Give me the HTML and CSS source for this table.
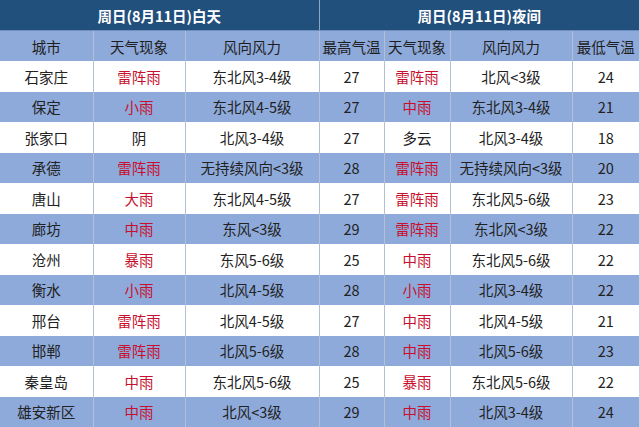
FILE: index.html
```html
<!DOCTYPE html>
<html lang="zh">
<head>
<meta charset="utf-8">
<link rel="stylesheet" href="styles.css">
</head>
<body>
<table class="wx">
  <colgroup>
    <col class="c1"><col class="c2"><col class="c3"><col class="c4"><col class="c5"><col class="c6"><col class="c7">
  </colgroup>
  <thead>
    <tr class="top">
      <th colspan="3">周日(8月11日)白天</th>
      <th colspan="4">周日(8月11日)夜间</th>
    </tr>
    <tr class="sub">
      <th>城市</th><th>天气现象</th><th>风向风力</th><th>最高气温</th><th>天气现象</th><th>风向风力</th><th>最低气温</th>
    </tr>
  </thead>
  <tbody>
    <tr><td>石家庄</td><td class="r">雷阵雨</td><td>东北风3-4级</td><td>27</td><td class="r">雷阵雨</td><td>北风&lt;3级</td><td>24</td></tr>
    <tr><td>保定</td><td class="r">小雨</td><td>东北风4-5级</td><td>27</td><td class="r">中雨</td><td>东北风3-4级</td><td>21</td></tr>
    <tr><td>张家口</td><td>阴</td><td>北风3-4级</td><td>27</td><td>多云</td><td>北风3-4级</td><td>18</td></tr>
    <tr><td>承德</td><td class="r">雷阵雨</td><td>无持续风向&lt;3级</td><td>28</td><td class="r">雷阵雨</td><td>无持续风向&lt;3级</td><td>20</td></tr>
    <tr><td>唐山</td><td class="r">大雨</td><td>东北风4-5级</td><td>27</td><td class="r">雷阵雨</td><td>东北风5-6级</td><td>23</td></tr>
    <tr><td>廊坊</td><td class="r">中雨</td><td>东风&lt;3级</td><td>29</td><td class="r">雷阵雨</td><td>东北风&lt;3级</td><td>22</td></tr>
    <tr><td>沧州</td><td class="r">暴雨</td><td>东风5-6级</td><td>25</td><td class="r">中雨</td><td>东北风5-6级</td><td>22</td></tr>
    <tr><td>衡水</td><td class="r">小雨</td><td>北风4-5级</td><td>28</td><td class="r">小雨</td><td>北风3-4级</td><td>22</td></tr>
    <tr><td>邢台</td><td class="r">雷阵雨</td><td>北风4-5级</td><td>27</td><td class="r">中雨</td><td>北风4-5级</td><td>21</td></tr>
    <tr><td>邯郸</td><td class="r">雷阵雨</td><td>北风5-6级</td><td>28</td><td class="r">中雨</td><td>北风5-6级</td><td>23</td></tr>
    <tr><td>秦皇岛</td><td class="r">中雨</td><td>东北风5-6级</td><td>25</td><td class="r">暴雨</td><td>东北风5-6级</td><td>22</td></tr>
    <tr><td>雄安新区</td><td class="r">中雨</td><td>北风&lt;3级</td><td>29</td><td class="r">中雨</td><td>北风3-4级</td><td>24</td></tr>
  </tbody>
</table>
</body>
</html>
```

FILE: styles.css
```css
html, body {
  margin: 0;
  padding: 0;
  background: #ffffff;
}
body {
  width: 640px;
  height: 427px;
  overflow: hidden;
  font-family: "Noto Sans CJK SC", "Noto Sans", sans-serif;
}
.wx {
  width: 640px;
  border-collapse: collapse;
  table-layout: fixed;
  font-size: 14.5px;
  color: #222222;
}
.c1 { width: 93px; }
.c2 { width: 92px; }
.c3 { width: 134px; }
.c4 { width: 65px; }
.c5 { width: 66px; }
.c6 { width: 122px; }
.c7 { width: 68px; }
.wx th, .wx td {
  padding: 0;
  text-align: center;
  white-space: nowrap;
  border-left: 1px solid #b3c0d3;
  font-weight: normal;
  line-height: 29px;
}
.wx tr > :first-child { border-left: none; }
.wx tr > :last-child { border-right: 2px solid #c9d3e2; }
.top th {
  background: #22507d;
  color: #ffffff;
  font-weight: bold;
  font-size: 14.5px;
  height: 30px;
  border-left-color: #8ea6c6;
  border-bottom: 1px solid #6f8fbf;
}
.sub th {
  background: #8eaadb;
  height: 30px;
  font-size: 14.5px;
  color: #1e1e1e;
}
.wx tbody tr { height: 30.5px; }
.wx tbody tr:nth-child(even) td { background: #8eaadb; }
.wx tbody tr:nth-child(odd) td { background: #ffffff; }
.wx td.r { color: #c8102e; }
```
